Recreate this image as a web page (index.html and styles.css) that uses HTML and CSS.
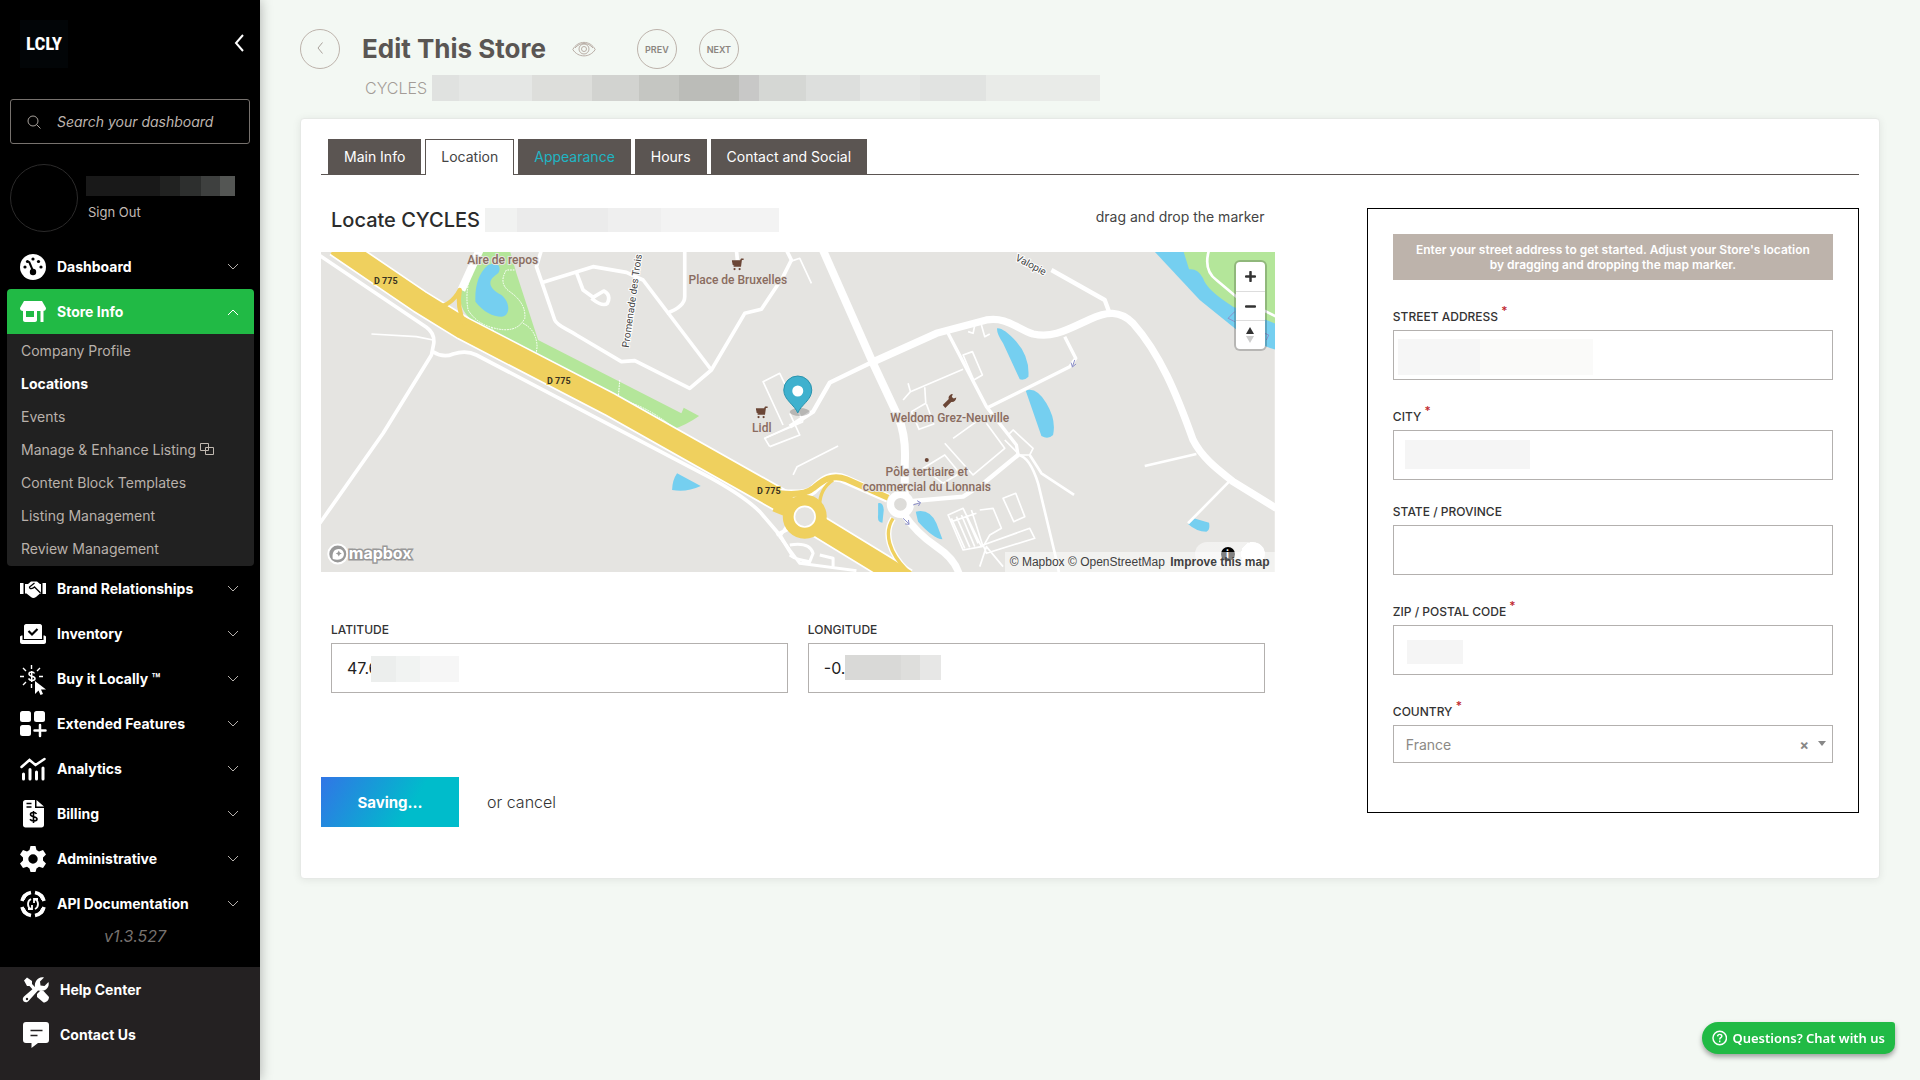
FILE: index.html
```html
<!DOCTYPE html>
<html lang="en">
<head>
    <meta charset="UTF-8">
    <meta name="viewport" content="width=device-width, initial-scale=1.0">
    <title>Edit This Store</title>
    <link rel="stylesheet" href="styles.css">
</head>
<body>

<!-- Shared icons -->
<svg class="defs" aria-hidden="true">
    <symbol id="chevron" viewBox="0 0 12 8"><path d="M1 1l5 5 5-5" fill="none" stroke="currentColor" stroke-width="1"/></symbol>
    <symbol id="cart" viewBox="0 0 13 13"><path d="M0 2h9l1-2h3v1.500h-2L10 9H2V8h1L1 7z"/><circle cx="3" cy="11.500" r="1.200"/><circle cx="8.500" cy="11.500" r="1.200"/></symbol>
</svg>

<div class="page">

<!-- Sidebar -->
<aside class="sidebar">
    <div class="brand">
        <span class="logo">LCLY</span>
        <button class="collapse" aria-label="Collapse menu">
            <svg width="10" height="18" viewBox="0 0 10 18"><path d="M9 1L2 9l7 8" fill="none" stroke="#fff" stroke-width="2"/></svg>
        </button>
    </div>

    <div class="search">
        <svg width="14" height="14" viewBox="0 0 14 14" fill="none" stroke="#a8a29c"><circle cx="6" cy="6" r="5"/><path d="M9.500 9.500l4 4"/></svg>
        <input type="text" placeholder="Search your dashboard" aria-label="Search your dashboard">
    </div>

    <div class="user">
        <div class="avatar"></div>
        <div class="user-info">
            <div class="hidden-name"></div>
            <a href="#">Sign Out</a>
        </div>
    </div>

    <nav class="menu">
        <button class="menu-item">
            <svg class="icon" viewBox="0 0 26 26"><circle cx="13" cy="13" r="13"/><g fill="#000"><circle cx="5" cy="13" r="1.600"/><circle cx="7.500" cy="7.500" r="1.600"/><circle cx="13" cy="5" r="1.600"/><circle cx="18.500" cy="7.500" r="1.600"/><circle cx="21" cy="13" r="1.600"/><circle cx="13" cy="18" r="3.200"/></g><path d="M9 7.500L13 17" stroke="#000" stroke-width="2"/></svg>
            <span>Dashboard</span>
            <svg class="chevron"><use href="#chevron"/></svg>
        </button>
        <button class="menu-item active">
            <svg class="icon" viewBox="0 0 26 26"><path d="M4 2h18l4 7c0 2-1 3-3 3H3C1 12 0 11 0 9z"/><path d="M3 12h3v6h8v-6h3v9c0 1-1 2-2 2H5c-1 0-2-1-2-2zM20.500 12h3v11h-3z"/></svg>
            <span>Store Info</span>
            <svg class="chevron"><use href="#chevron"/></svg>
        </button>
        <div class="submenu">
            <a href="#">Company Profile</a>
            <a href="#" class="current">Locations</a>
            <a href="#">Events</a>
            <a href="#">Manage &amp; Enhance Listing
                <svg width="14" height="13" viewBox="0 0 14 13" fill="none" stroke="#c0b8b0"><path d="M.5.5h8v7h-8zM5.500 4.500h8v7h-8z"/></svg>
            </a>
            <a href="#">Content Block Templates</a>
            <a href="#">Listing Management</a>
            <a href="#">Review Management</a>
        </div>
        <button class="menu-item">
            <svg class="icon" viewBox="0 0 26 26"><path d="M0 7h3.500v11H0zM22.500 7H26v11h-3.500zM5 8h3l3-2.500h6L20 8h1v9.500h-1l-4 3.500c-2 1.500-4 1-5 0L6.500 17.500H5z"/><path d="M14.500 7l-5 4c0 2.500 3 2 5 0l6 6" fill="none" stroke="#000" stroke-width="1.300"/></svg>
            <span>Brand Relationships</span>
            <svg class="chevron"><use href="#chevron"/></svg>
        </button>
        <button class="menu-item">
            <svg class="icon" viewBox="0 0 26 26"><path d="M6 3h14c1 0 2 1 2 2v13H4V5c0-1 1-2 2-2z"/><path d="M0 16c0-1 1-1.500 2.500-1.500V19h21v-4.500c1.500 0 2.500.5 2.500 1.500v5c0 1-1 2-2 2H2c-1 0-2-1-2-2z"/><path d="M8.500 10l3.500 3.500L17.500 8" fill="none" stroke="#000" stroke-width="2.200"/></svg>
            <span>Inventory</span>
            <svg class="chevron"><use href="#chevron"/></svg>
        </button>
        <button class="menu-item">
            <svg class="icon tall" viewBox="0 0 26 30"><path d="M11.500 1v4M11.500 20v4M0 12.500h4M19 12.500h4M3 4l3 3M20 4l-3 3M3 21l3-3" fill="none" stroke="#fff" stroke-width="1.400"/><path d="M15 17v13l3.500-3.500L20.500 31l2.500-1-2-4.500h5z"/><path d="M14.500 9.500c-1-2-5.500-2-5.500.500 0 3 6 1.500 6 4.500 0 2.500-5 2.500-6.500 0M11.700 7v11" fill="none" stroke="#fff" stroke-width="1.500"/></svg>
            <span>Buy it Locally ™</span>
            <svg class="chevron"><use href="#chevron"/></svg>
        </button>
        <button class="menu-item">
            <svg class="icon" viewBox="0 0 26 26"><rect x="0" y="0" width="11" height="11" rx="2.500"/><rect x="14" y="0" width="11" height="11" rx="2.500"/><rect x="0" y="14" width="11" height="11" rx="2.500"/><path d="M20 14v11M14.500 19.500h11" stroke="#fff" stroke-width="2.500" stroke-linecap="round"/></svg>
            <span>Extended Features</span>
            <svg class="chevron"><use href="#chevron"/></svg>
        </button>
        <button class="menu-item">
            <svg class="icon" viewBox="0 0 26 26" fill="none" stroke="#fff" stroke-linecap="round" stroke-width="3"><path d="M1.500 11l8-7 6 5L24.500 3" stroke-width="2.500"/><path d="M3.500 18v5M10 13.500V23M16.500 16v7M23 12v11"/></svg>
            <span>Analytics</span>
            <svg class="chevron"><use href="#chevron"/></svg>
        </button>
        <button class="menu-item">
            <svg class="icon tall" viewBox="0 0 26 30"><path d="M5.500 1H15v8h9v17c0 1.500-1 2.500-2.500 2.500h-16C4 28.500 3 27.500 3 26V3.500C3 2 4 1 5.500 1zM16.500 1L24 7.500h-7.500z"/><path d="M6.500 4.500h5M6.500 8h5M16.500 15c-1-2-6-2-6 .5 0 3 6.500 1.500 6.500 4.500 0 2.500-5.500 2.500-7 .3M13.500 12v12" fill="none" stroke="#000" stroke-width="1.600"/></svg>
            <span>Billing</span>
            <svg class="chevron"><use href="#chevron"/></svg>
        </button>
        <button class="menu-item">
            <svg class="icon" viewBox="0 0 26 26"><path fill-rule="evenodd" d="M10.500 0h5l1 4 2.500 1.500 4-1.500 3 4.500-3 3v3l3 3-3 4.500-4-1.200L16.500 22.500l-1 3.500h-5l-1-3.500L7 20.800 3 22l-3-4.500 3-3v-3l-3-3L3 4l4 1.500L9.500 4zM13 8.300a4.700 4.700 0 100 9.400 4.700 4.700 0 000-9.400z"/></svg>
            <span>Administrative</span>
            <svg class="chevron"><use href="#chevron"/></svg>
        </button>
        <button class="menu-item">
            <svg class="icon" viewBox="0 0 26 26" fill="none" stroke="#fff" stroke-width="3.500"><path d="M11 1.500C6 2.500 3 5.500 2 10M15 1.500c5 1 8 4 9 8.500M11 24.500c-5-1-8-4-9-8.500M15 24.500c5-1 8-4 9-8.500"/><path d="M3 4l4 0-3 5zM23 4h-4l3 5zM3 22h4l-3-5zM23 22h-4l3-5z" stroke-width="1"/><path d="M11 8c-4 2-4 8 0 10M8 18h4v-4M15 18c4-2 4-8 0-10M18 8h-4v4" stroke-width="1.800"/></svg>
            <span>API Documentation</span>
            <svg class="chevron"><use href="#chevron"/></svg>
        </button>
    </nav>
    <div class="version">v1.3.527</div>

    <div class="help">
        <a href="#">
            <svg class="icon" viewBox="0 0 26 26"><path d="M1 3.500L4 .500l5 3.500v3l4.500 4.500-2.500 2.500L6.500 9H4z"/><path d="M14 17l3-3h3.500l5.500 6c0 3-2.500 5.500-5.500 5.500L14 20z"/><path d="M15 13.500L5.500 24c-3 3.500-8-1-4.500-4.500L12 10c-1-5 3-11 9-9.500l-4 4 .5 4 4 .5 4-4c1.500 6-4 10.500-10.500 8.500z"/><circle cx="4" cy="22" r="1.200" fill="#242122"/></svg>
            <span>Help Center</span>
        </a>
        <a href="#">
            <svg class="icon" viewBox="0 0 26 26"><path d="M3 0h20c2 0 3 1 3 3v15c0 2-1 3-3 3h-8l-6.500 5V21H3c-2 0-3-1-3-3V3c0-2 1-3 3-3z"/><path d="M7.500 8.500h12M7.500 13.500h7" stroke="#242122" stroke-width="1.600"/></svg>
            <span>Contact Us</span>
        </a>
    </div>
</aside>

<!-- Main content -->
<main class="main">
    <header class="header">
        <div class="title-row">
            <button class="round back" aria-label="Back">
                <svg width="6" height="12" viewBox="0 0 6 12"><path d="M5.500.5L1 6l4.500 5.500" fill="none" stroke="#a9a19b"/></svg>
            </button>
            <h1>Edit This Store</h1>
            <a href="#" class="eye" aria-label="View">
                <svg width="24" height="16" viewBox="0 0 24 16" fill="none" stroke="#b9aea6"><path d="M.8 8.500C6-1 18-1 23.200 8.500 18 17 6 17 .8 8.500z"/><path d="M3 7c5-6 13-6 18 0"/><circle cx="12" cy="8" r="5"/><circle cx="12" cy="8" r="2.500"/></svg>
            </a>
            <button class="round">PREV</button>
            <button class="round next">NEXT</button>
        </div>
        <div class="store-name">CYCLES <span class="hidden-store"></span></div>
    </header>

    <section class="card">
        <nav class="tabs">
            <a href="#">Main Info</a>
            <a href="#" class="selected">Location</a>
            <a href="#" class="hovered">Appearance</a>
            <a href="#">Hours</a>
            <a href="#">Contact and Social</a>
        </nav>

        <form class="columns">
            <div class="locate">
                <div class="locate-head">
                    <h2>Locate CYCLES <span class="hidden-locate"></span></h2>
                    <span class="hint">drag and drop the marker</span>
                </div>

                <!-- Map -->
                <div class="map">
                    <svg class="map-canvas" viewBox="0 0 954 320" preserveAspectRatio="xMidYMid slice">
                        <rect width="954" height="320" fill="#e5e4e1"/>
                        <!-- west half -->
                        <g transform="translate(-11 -12) scale(.3333)" fill="none" stroke-linejoin="round">
                            <path fill="#b4e69a" d="M500 30H600L620 100 685 300 1115 520 1122 503 1168 528Q1130 555 1085 570C900 490 700 380 560 290 470 240 450 210 450 160z"/>
                            <path fill="#75cff0" d="M535 75C570 62 575 85 565 100 535 120 530 140 575 165 605 190 600 230 575 230 550 230 520 215 497 185 495 140 505 100 535 75zM1102 700L1173 738Q1130 758 1087 750 1088 720 1102 700z"/>
                            <path stroke="#fff" stroke-width="3" stroke-dasharray="5 3" d="M510 50Q460 130 475 210 500 250 545 262 620 285 645 235 650 190 600 155 565 130 590 90H615M545 262Q570 310 680 355 800 430 925 480 1000 490 1090 562M640 250Q680 270 682 320L678 350M930 420L925 480"/>
                            <g stroke="#fff" stroke-width="11">
                                <path d="M20 40L350 262Q375 280 372 310L365 345 220 580 30 850M370 335Q400 355 430 342 470 330 500 345L1200 712C1260 745 1320 785 1350 815L1410 885 1450 950M1400 885L1440 865"/>
                                <path d="M695 30L680 80 735 240C745 260 770 265 800 285L935 365 975 362 1140 445 1205 390 1305 220 1355 208 1420 110 1445 60 1430 30"/>
                                <path d="M700 127L850 80 950 97 1000 120 1205 390M800 97L820 150 850 172 882 153Q905 165 893 190 880 202 845 175M1125 30V170Q1125 200 1070 220M1280 30L1283 60"/>
                                <path stroke-width="5" d="M185 282L320 290 370 300"/>
                                <path stroke-width="24" d="M512 25L455 150"/>
                                <path stroke-width="5" d="M1420 555L1360 425 1410 400 1480 545M1380 620L1365 595 1480 545"/>
                            </g>
                            <path stroke="#fff" stroke-width="74" d="M80 15L330 185 460 265 900 493 1410 780 1470 810"/>
                            <path stroke="#efd05e" stroke-width="64" d="M80 15L330 185 460 265 900 493 1410 780 1475 815"/>
                            <path stroke="#efd05e" stroke-width="13" d="M370 200Q420 205 450 150 440 200 465 255"/>
                        </g>
                        <!-- east half -->
                        <g transform="translate(469 -52) scale(.3333)" fill="none" stroke-linejoin="round">
                            <path fill="#75cff0" d="M1090 150H1460V450Q1400 435 1335 385L1230 300z"/>
                            <path fill="#b4e69a" d="M1180 150H1460V372L1330 320Q1250 270 1240 235 1225 205 1198 208z"/>
                            <path fill="#75cff0" d="M622 385Q640 382 680 425 720 470 716 530 705 542 690 538L640 430Q620 400 622 385zM708 572Q740 560 770 610 800 660 790 705 775 720 755 708zM378 935Q420 925 440 970L458 1018Q430 1015 385 965zM265 910Q280 905 282 930L278 968Q262 968 265 945zM1195 972L1212 955 1258 968Q1262 990 1250 995 1220 995 1195 972z"/>
                            <g stroke="#fff">
                                <path stroke-width="24" d="M95 140L250 490 325 650Q350 710 345 790V890"/>
                                <path stroke-width="22" d="M240 490L440 400 590 360C650 350 680 385 730 402 790 415 830 390 900 358 950 335 990 330 1030 370 1110 460 1160 580 1210 720 1240 780 1300 820 1330 845L1460 925"/>
                                <path stroke-width="13" d="M0 680L70 635 120 548 240 490M785 210L945 300 958 335M370 903L520 890 575 855 685 765"/>
                                <path stroke-width="10" d="M475 400L590 620 680 735 685 765M590 625L840 500 858 475 825 410"/>
                                <path stroke-width="8" d="M1258 150Q1240 210 1280 240L1340 290 1460 350M1065 798L1220 762M1318 845L1195 970M685 765Q720 770 745 850L800 1080 810 1130M720 765L755 820 853 885"/>
                                <path stroke-width="5" d="M0 185L30 175 65 250M355 550L362 575 520 508M340 600L362 575M405 562L408 610 365 635 388 688 432 672 410 612M520 465L548 455 578 525 552 540zM575 375L585 410 600 402M555 375L550 400 535 395M655 705L670 690 730 745 720 765H690L645 720M490 715L560 665M465 730L550 825 645 745 590 670M400 805L465 765 510 820 460 850zM10 825L22 800 145 738M-75 715L0 680M0 640L30 705-60 740"/>
                                <path stroke-width="5" d="M640 895L678 880 705 950 672 965zM580 1035L720 985 735 1015 590 1060zM570 930L610 925 635 985 600 1005 580 1040 545 930M475 945L520 925 575 1040 520 1050zM485 955L525 1045M500 950L540 1042M515 945L555 1040M530 950L565 1030M485 965L560 940M570 1100L590 1040 640 1100"/>
                                <path stroke-width="9" d="M0 1035Q60 1025 70 1060L60 1085Q20 1080 0 1065M10 950L-30 1010 30 1090 200 1112M90 1065L130 1075V1100"/>
                                <path stroke-width="22" d="M340 940Q380 1000 440 1040 500 1080 510 1130"/>
                                <circle cx="332" cy="913" r="30" stroke-width="22" fill="#dddcd9"/>
                                <path stroke-width="28" d="M295 895L170 840C120 815 90 850 70 870 50 885 20 885-30 880"/>
                                <path stroke-width="72" d="M80 975L350 1140"/>
                                <path stroke-width="18" d="M350 1110C300 1060 280 1000 310 955"/>
                            </g>
                            <g stroke="#efd05e">
                                <path stroke-width="18" d="M295 893L170 838C120 818 90 850 70 865 50 882 20 885-30 880"/>
                                <path stroke-width="10" d="M90 930Q85 870 130 840M350 1110C300 1060 280 1000 310 955"/>
                                <path stroke-width="62" d="M80 975L350 1140M-40 905L20 930"/>
                                <circle cx="45" cy="950" r="48" stroke-width="36" fill="#e5e4e1"/>
                            </g>
                            <circle cx="45" cy="950" r="31" stroke="#fff" stroke-width="5"/>
                            <path stroke="#8d90c9" stroke-width="3" d="M370 915L392 908M382 902L392 908 386 918M340 955L358 972M356 960L358 973 346 972M855 480L848 500M844 488L848 501 859 492M1335 335L1315 355 1335 365M1425 400L1437 405 1430 420"/>
                        </g>
                        <g fill="#6b4636">
                            <use href="#cart" x="411" y="6" width="12" height="13"/>
                            <use href="#cart" x="435" y="154" width="12" height="13"/>
                            <path d="M622 153l6-6c-1-3 2-5 4-5l-1 3 2 1.500 2.500-1c0 3-2.500 5-5 4.500l-6 6z"/>
                            <circle cx="606" cy="208" r="2"/>
                        </g>
                        <g class="poi">
                            <text x="182" y="12">Aire de repos</text>
                            <text x="417" y="32">Place de Bruxelles</text>
                            <text x="441" y="180">Lidl</text>
                            <text x="629" y="170">Weldom Grez-Neuville</text>
                            <text x="606" y="224">Pôle tertiaire et</text>
                            <text x="606" y="239">commercial du Lionnais</text>
                        </g>
                        <g class="road">
                            <text x="65" y="32">D 775</text>
                            <text x="238" y="132">D 775</text>
                            <text x="448" y="242">D 775</text>
                        </g>
                        <g class="street">
                            <text transform="translate(308 96) rotate(-82)">Promenade des Trois</text>
                            <text transform="translate(694 8) rotate(28)">Valopie</text>
                        </g>
                        <!-- marker -->
                        <ellipse cx="479" cy="160" rx="10" ry="4" fill="#0003"/>
                        <path d="M477 161c-3-8-14-13-14-23a14 14 0 0128 0c0 10-11 15-14 23z" fill="#3fb1ce" stroke="#2a93ad"/>
                        <circle cx="477" cy="139" r="5.500" fill="#fff"/>
                        <!-- mapbox logo -->
                        <g class="mapbox">
                            <circle cx="17" cy="302" r="9.500" fill="#999" stroke="#fff" stroke-width="2"/>
                            <path d="M12 307c-1-6 1-10 6-10 6 0 7 8 2 10-2 1-5 1-8 0z" fill="#fff"/>
                            <path d="M18 298.500l1 2 2 1-2 1-1 2-1-2-2-1 2-1z" fill="#999"/>
                            <text x="28" y="307">mapbox</text>
                        </g>
                    </svg>
                    <div class="zoom-control">
                        <button type="button" aria-label="Zoom in"><svg width="11" height="11" viewBox="0 0 11 11"><path d="M5.500 1v9M1 5.500h9" stroke="#333" stroke-width="2.500" stroke-linecap="round"/></svg></button>
                        <button type="button" aria-label="Zoom out"><svg width="11" height="11" viewBox="0 0 11 11"><path d="M1 5.500h9" stroke="#333" stroke-width="2.500" stroke-linecap="round"/></svg></button>
                        <button type="button" aria-label="Reset north"><svg width="8" height="16" viewBox="0 0 8 16"><path d="M0 7l4-7 4 7z" fill="#333"/><path d="M0 9l4 7 4-7z" fill="#ccc"/></svg></button>
                    </div>
                    <div class="info-pill"><b>i</b></div>
                    <div class="attribution">
                        <a href="#">© Mapbox</a> <a href="#">© OpenStreetMap</a> <a href="#" class="improve">Improve this map</a>
                    </div>
                </div>

                <div class="coords">
                    <div class="field">
                        <label for="latitude">LATITUDE</label>
                        <input type="text" id="latitude" value="47.6">
                        <span class="mask mask-lat"></span>
                    </div>
                    <div class="field">
                        <label for="longitude">LONGITUDE</label>
                        <input type="text" id="longitude" value="-0.">
                        <span class="mask mask-lng"></span>
                    </div>
                </div>

                <div class="actions">
                    <button type="button" class="save-btn">Saving...</button>
                    <a href="#">or cancel</a>
                </div>
            </div>

            <!-- Address -->
            <div class="address">
                <p class="notice">Enter your street address to get started. Adjust your Store's location by dragging and dropping the map marker.</p>
                <div class="field required">
                    <label for="street">STREET ADDRESS</label>
                    <input type="text" id="street">
                    <span class="mask mask-street"></span>
                </div>
                <div class="field required">
                    <label for="city">CITY</label>
                    <input type="text" id="city">
                    <span class="mask mask-city"></span>
                </div>
                <div class="field">
                    <label for="state">STATE / PROVINCE</label>
                    <input type="text" id="state">
                </div>
                <div class="field required">
                    <label for="zip">ZIP / POSTAL CODE</label>
                    <input type="text" id="zip">
                    <span class="mask mask-zip"></span>
                </div>
                <div class="field required">
                    <label for="country">COUNTRY</label>
                    <select id="country"><option>France</option></select>
                    <button type="button" class="clear" aria-label="Clear country">×</button>
                    <span class="arrow"></span>
                </div>
            </div>
        </form>
    </section>
</main>
</div>

<button class="chat">
    <svg width="16" height="16" viewBox="0 0 16 16" fill="none" stroke="#fff" stroke-width="1.500"><circle cx="8" cy="8" r="7"/><path d="M5.800 6.300C6 3.500 10.300 3.700 10.200 6.200 10.100 7.700 8 7.700 8 9.500M8 10.700v1.700"/></svg>
    Questions? Chat with us
</button>

</body>
</html>
```

FILE: styles.css
```css
* {
    box-sizing: border-box;
}
body {
    margin: 0;
    background-color: #f3f8f3;
    font-family: Inter, "Liberation Sans", sans-serif;
    font-size: 14px;
    color: #333;
}
a {
    color: inherit;
    text-decoration: none;
}
button {
    font-family: inherit;
    cursor: pointer;
}
.defs {
    display: none;
}
.page {
    display: flex;
    min-height: 100vh;
}

/* Sidebar */
.sidebar {
    display: flex;
    flex-direction: column;
    flex: 0 0 260px;
    min-width: 0;
    background-color: #000;
    box-shadow: 0 0 12px rgba(0, 0, 0, 0.3);
    color: #fff;
}
.brand {
    display: flex;
    align-items: center;
    justify-content: space-between;
    height: 88px;
    padding: 0 14px 0 20px;
}
.logo {
    width: 48px;
    height: 48px;
    background-color: #020507;
    font-family: "Roboto Condensed", "Liberation Sans Narrow", Roboto, sans-serif;
    font-size: 19px;
    font-weight: bold;
    line-height: 48px;
    text-align: center;
}
.collapse {
    padding: 2px;
    border: 0;
    background: none;
}
.search {
    display: flex;
    align-items: center;
    gap: 16px;
    height: 45px;
    margin: 11px 10px 20px;
    padding: 0 16px;
    border: 1px solid #77726e;
    border-radius: 3px;
}
.search input {
    flex: 1;
    min-width: 0;
    padding: 0;
    border: 0;
    background: none;
    font: italic 14px Inter, sans-serif;
    color: #fff;
}
.search input::placeholder {
    color: #bdb4ae;
}
.user {
    display: flex;
    gap: 8px;
    margin: 0 10px 12px;
}
.avatar {
    width: 68px;
    height: 68px;
    border: 1px solid #2b2a2a;
    border-radius: 50%;
}
.user-info {
    padding-top: 12px;
    font-size: 13px;
    color: #c2bab4;
}
.user-info a {
    display: block;
    padding: 8px 2px;
}
.hidden-name {
    width: 149px;
    height: 20px;
    background: linear-gradient(to right, #191919 50%, #212221 50% 63%, #2d2f2e 63% 77%, #3e403f 77% 90%, #545654 90%);
}
.menu-item {
    display: flex;
    align-items: center;
    gap: 11px;
    width: 247px;
    height: 45px;
    margin: 0 6px 0 7px;
    padding: 0 15px 0 13px;
    border: 0;
    background: none;
    font-size: 14px;
    font-weight: 700;
    color: #fff;
    text-align: left;
}
.menu-item span {
    flex: 1;
}
.icon {
    width: 26px;
    height: 26px;
    fill: #fff;
    overflow: visible;
}
.icon[fill="none"] {
    fill: none;
}
.icon.tall {
    height: 30px;
}
.chevron {
    width: 12px;
    height: 8px;
    color: #b5b0ac;
}
.menu-item.active {
    border-radius: 4px 4px 0 0;
    background-color: #21ba45;
}
.menu-item.active .chevron {
    color: #fff;
    transform: rotate(180deg);
}
.submenu {
    margin: 0 6px 0 7px;
    padding-bottom: 1px;
    border-radius: 0 0 4px 4px;
    background-color: #212121;
}
.submenu a {
    display: block;
    height: 33px;
    padding-left: 14px;
    line-height: 34px;
    color: #b9b1ab;
}
.submenu .current {
    font-weight: 700;
    color: #fff;
}
.submenu svg {
    vertical-align: -1px;
}
.version {
    padding: 0 0 21px 10px;
    font-size: 16px;
    font-style: italic;
    line-height: 20px;
    text-align: center;
    color: #77726f;
}
.help {
    flex: 1;
    background-color: #242122;
}
.help a {
    display: flex;
    align-items: center;
    gap: 11px;
    height: 45px;
    padding-left: 23px;
    font-weight: 700;
}

/* Header */
.main {
    flex: 1;
    min-width: 0;
    padding: 29px 40px 0;
}
.title-row {
    display: flex;
    align-items: center;
}
.round {
    width: 40px;
    height: 40px;
    padding: 0;
    border: 1px solid #bdb3ab;
    border-radius: 50%;
    background: none;
    font-size: 9px;
    font-weight: 600;
    color: #8b8580;
}
.next {
    margin-left: 22px;
}
h1 {
    margin: 0 26px 0 22px;
    font-size: 26px;
    font-weight: 700;
    line-height: 40px;
    color: #5a5653;
}
.eye {
    height: 16px;
    margin-right: 41px;
}
.store-name {
    display: flex;
    align-items: center;
    gap: 5px;
    margin: 6px 0 17px 65px;
    font-size: 16px;
    font-weight: 300;
    color: #a39c97;
}
.hidden-store {
    width: 668px;
    height: 26px;
    background: linear-gradient(to right, #e0e2e0 4%, #e5e7e5 4% 15%, #dddedb 15% 24%, #d2d3d0 24% 31%, #c5c6c2 31% 37%, #bbbcb8 37% 46%, #c8c8c7 46% 49%, #d5d7d4 49% 56%, #dddfdd 56% 64%, #e5e7e5 64% 73%, #e1e3e1 73% 83%, #e9ebe8 83%);
}

/* Card */
.card {
    padding: 20px 20px 51px;
    border: 1px solid #e6e9e6;
    border-radius: 4px;
    background-color: #fff;
    box-shadow: 0 1px 8px rgba(0, 0, 0, 0.08);
}
.tabs {
    display: flex;
    gap: 4px;
    height: 36px;
    margin-bottom: 33px;
    padding-left: 7px;
    border-bottom: 1px solid #5b5552;
}
.tabs a {
    height: 35px;
    padding: 0 16px;
    background-color: #5b5552;
    line-height: 35px;
    color: #fff;
}
.tabs .selected {
    height: 36px;
    padding: 0 15px;
    border: 1px solid #5b5552;
    border-bottom: 0;
    background-color: #fff;
    line-height: 33px;
    color: #444;
}
.tabs .hovered {
    color: #1fb5c4;
}
.columns {
    display: grid;
    grid-template-columns: 62% 32%;
    justify-content: space-between;
    align-items: start;
}
.locate-head {
    display: flex;
    justify-content: space-between;
    height: 44px;
    padding: 0 10px;
}
h2 {
    display: flex;
    align-items: center;
    gap: 5px;
    height: 24px;
    margin: 0;
    font-size: 20px;
    font-weight: 500;
    color: #2c2c2c;
}
.hidden-locate {
    width: 294px;
    height: 24px;
    background: linear-gradient(to right, #f1f2f1 11%, #ebebeb 11% 42%, #efefef 42% 60%, #f3f3f3 60%);
}
.hint {
    line-height: 18px;
    color: #444;
}

/* Map */
.map {
    position: relative;
    height: 320px;
    overflow: hidden;
}
.map-canvas {
    display: block;
    width: 100%;
    height: 100%;
}
.poi,
.road,
.street {
    font-family: Roboto, sans-serif;
    font-size: 12px;
    font-weight: 500;
    paint-order: stroke;
    stroke: #e5e4e1;
    stroke-width: 2px;
}
.poi {
    fill: #8a6c5f;
    text-anchor: middle;
}
.road {
    fill: #3a3320;
    stroke: #efd05e;
    font-size: 9px;
    font-weight: bold;
    text-anchor: middle;
}
.street {
    fill: #444;
    font-size: 10px;
    font-weight: normal;
    stroke: #fff;
}
.mapbox {
    stroke: #999;
}
.mapbox path {
    stroke: none;
}
.mapbox text {
    fill: #fff;
    font-size: 16px;
    font-weight: bold;
    paint-order: stroke;
    stroke-width: 3px;
}
.zoom-control {
    position: absolute;
    top: 10px;
    right: 10px;
    width: 29px;
    border-radius: 4px;
    background-color: #fff;
    box-shadow: 0 0 0 2px rgba(0, 0, 0, 0.2);
}
.zoom-control button {
    display: flex;
    align-items: center;
    justify-content: center;
    width: 29px;
    height: 29px;
    padding: 0;
    border: 0;
    background: none;
}
.zoom-control button + button {
    border-top: 1px solid #ddd;
}
.info-pill {
    position: absolute;
    right: 10px;
    bottom: 6px;
    width: 70px;
    height: 24px;
    padding: 5px 0 0 26px;
    border-radius: 12px;
    background: radial-gradient(circle at 58px 12px, #fff 12px, rgba(255, 255, 255, 0.5) 12px);
}
.info-pill b {
    display: block;
    width: 14px;
    height: 14px;
    border-radius: 50%;
    background-color: #000;
    font-size: 11px;
    line-height: 14px;
    text-align: center;
    color: #fff;
}
.attribution {
    position: absolute;
    right: 0;
    bottom: 0;
    padding: 0 5px;
    background-color: rgba(255, 255, 255, 0.5);
    font-family: "Liberation Sans", sans-serif;
    font-size: 12px;
    line-height: 20px;
    color: #404040;
}
.improve {
    margin-left: 2px;
    font-weight: bold;
}

/* Form fields */
.field {
    position: relative;
    margin-bottom: 25px;
}
.field label {
    display: block;
    height: 20px;
    font-size: 12px;
    font-weight: 500;
    line-height: 14px;
    color: #333;
}
.required label {
    height: 25px;
    padding-top: 5px;
}
.required label::after {
    content: " *";
    position: relative;
    top: -6px;
    color: #c0272d;
}
.field input,
.field select {
    display: block;
    width: 100%;
    height: 50px;
    padding: 0 15px;
    border: 1px solid #b3b0ae;
    border-radius: 0;
    background-color: #fff;
    font: 16px Inter, sans-serif;
    color: #222;
}
.field select {
    height: 38px;
    padding: 0 12px;
    appearance: none;
    font-size: 14px;
    color: #8b8985;
}
.clear {
    position: absolute;
    right: 24px;
    bottom: 9px;
    padding: 0;
    border: 0;
    background: none;
    font-size: 14px;
    font-weight: bold;
    line-height: 18px;
    color: #888;
}
.arrow {
    position: absolute;
    right: 7px;
    bottom: 17px;
    border: 4px solid transparent;
    border-top: 5px solid #888;
    border-bottom: 0;
}
.coords {
    display: grid;
    grid-template-columns: 1fr 1fr;
    gap: 20px;
    margin-top: 51px;
    padding: 0 10px;
}

/* Blanked-out values */
.mask {
    position: absolute;
    background-color: #f5f5f5;
}
.mask-lat {
    left: 40px;
    bottom: 11px;
    width: 88px;
    height: 26px;
    background: linear-gradient(to right, #eceeed 28%, #f1f3f2 28% 56%, #f6f6f6 56%);
}
.mask-lng {
    left: 37px;
    bottom: 13px;
    width: 96px;
    height: 25px;
    background: linear-gradient(to right, #d9d9d7 58%, #dededc 58% 78%, #e7e7e6 78%);
}
.mask-street {
    left: 5px;
    bottom: 5px;
    width: 195px;
    height: 36px;
    background: linear-gradient(to right, #f6f6f6 42%, #fafaf9 42%);
}
.mask-city {
    left: 12px;
    bottom: 11px;
    width: 125px;
    height: 29px;
}
.mask-zip {
    left: 14px;
    bottom: 11px;
    width: 56px;
    height: 24px;
}

/* Buttons */
.actions {
    display: flex;
    align-items: center;
    gap: 28px;
    margin-top: 59px;
    font-size: 16px;
    font-weight: 300;
}
.save-btn {
    width: 138px;
    height: 50px;
    border: 0;
    background: linear-gradient(120deg, #3175e6, #00bccb 65%);
    font-size: 15px;
    font-weight: 700;
    color: #fff;
}

/* Address panel */
.address {
    padding: 25px 25px 24px;
    border: 1px solid #000;
}
.notice {
    margin: 0 0 25px;
    padding: 8px 20px;
    background-color: #bdb3ab;
    font-size: 12px;
    font-weight: 600;
    line-height: 15px;
    text-align: center;
    color: #fff;
}

/* Chat */
.chat {
    position: fixed;
    right: 25px;
    bottom: 26px;
    display: flex;
    align-items: center;
    gap: 5px;
    width: 193px;
    height: 32px;
    padding: 0 10px;
    border: 0;
    border-radius: 16px 3px 10px 16px;
    background-color: #21ba45;
    box-shadow: 0 3px 5px rgba(0, 0, 0, 0.35);
    font-family: "Noto Sans", "Open Sans", sans-serif;
    font-size: 13px;
    font-weight: 600;
    color: #fff;
    white-space: nowrap;
}
```
